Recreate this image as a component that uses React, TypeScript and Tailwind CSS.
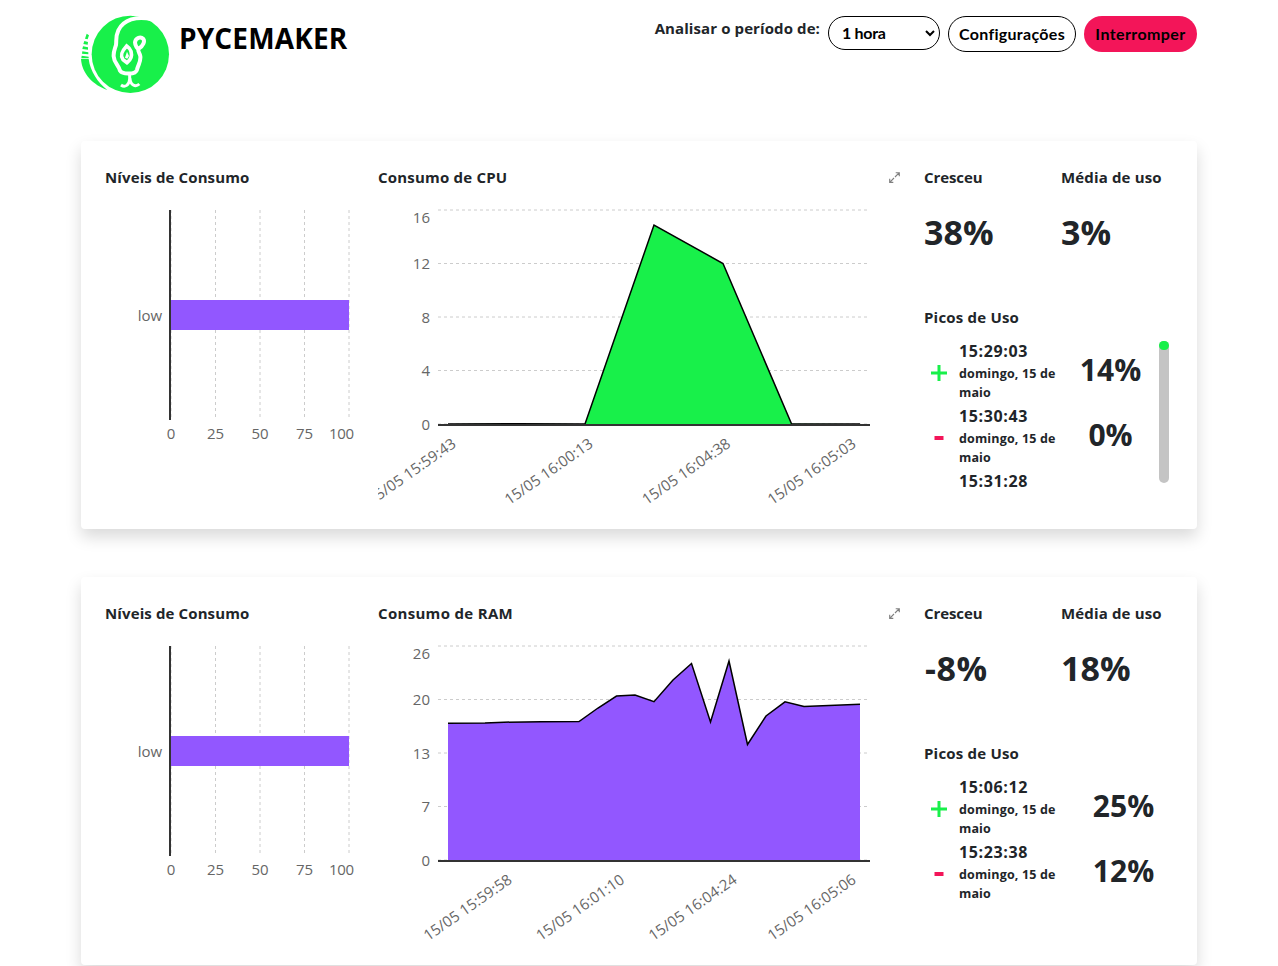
import React from "react";

type Pt = [number, number];
type Label = { x: number; text: string };
type Peak = { time: string; up: boolean; value?: string };

const FONT = "font-['Open_Sans','Noto_Sans',sans-serif]";

function Logo() {
  return (
    <svg className="block h-[79px] w-[89px]" viewBox="33 30 267 237" fill="none">
      <circle cx="181" cy="148" r="116" fill="#18f04a" />
      <path d="M33 162H56C61 200 83 232 112 255C70 240 36 207 33 162Z" fill="#18f04a" />
      <path d="M50 86L57 91L53 103L45 101ZM43 108L54 111L53 119L40 117ZM39 124L54 127V134L37 132ZM37 139L55 142V148L36 146ZM35 152L56 155V160H34Z" fill="#18f04a" />
      <path d="M246 43C200 31 160 45 145 76C136 95 140 106 138 120C134 134 130 140 131 154C132 173 145 179 150 197C158 209 197 209 201 194C204 179 213 172 211 154C210 145 203 139 205 132C220 124 225 108 220 102C212 94 197 98 195 112C195 123 204 132 205 132" stroke="#fff" strokeWidth="12" strokeLinejoin="round" />
      <path d="M170 123C155 139 149 151 159 164L171 173C184 164 187 154 183 139C180 130 176 127 170 123Z" stroke="#fff" strokeWidth="11" />
      <path d="M171 140L165 158L172 161L177 153Z" fill="#fff" />
      <path d="M179 207V222C178 240 165 249 153 240M180 220C181 240 196 248 208 237" stroke="#fff" strokeWidth="9" />
    </svg>
  );
}

function LevelsChart() {
  return (
    <svg className="block" width="260" height="310" viewBox="105 200 260 310">
      {[171, 215.5, 260, 304.5, 349].map((x) => (
        <line key={x} x1={x} x2={x} y1="210" y2="419" stroke="#ccc" strokeDasharray="3 3" />
      ))}
      <rect x="171" y="300" width="178" height="30" fill="#9257ff" />
      <line x1="170" x2="170" y1="210" y2="420" stroke="#333" strokeWidth="2" />
      <g className={FONT} fontSize="15" fill="#666" textAnchor="middle">
        <text x="150" y="321">low</text>
        <text x="171" y="439">0</text>
        <text x="215.5" y="439">25</text>
        <text x="260" y="439">50</text>
        <text x="304.5" y="439">75</text>
        <text x="341.5" y="439" textLength="25">100</text>
      </g>
    </svg>
  );
}

function AreaChart({ points, ticks, labels, color }: { points: Pt[]; ticks: string[]; labels: Label[]; color: string }) {
  const line = points.map((p) => p.join(",")).join(" ");
  const tickY = [223, 269, 323, 376, 430];
  return (
    <svg className="block" width="512" height="310" viewBox="378 200 512 310">
      {[210, 263.5, 317, 370.5, 424].map((y) => (
        <line key={y} x1="438" x2="868" y1={y} y2={y} stroke="#ccc" strokeDasharray="3 3" />
      ))}
      <polygon points={"448,424 " + line + " 860,424"} fill={color} />
      <polyline points={line} fill="none" stroke="#000" strokeWidth="1.5" />
      <line x1="438" x2="870" y1="425" y2="425" stroke="#333" strokeWidth="2" />
      <g className={FONT} fontSize="15" fill="#666" textAnchor="end">
        {ticks.map((t, i) => (
          <text key={t} x="430" y={tickY[i]}>{t}</text>
        ))}
        {labels.map((l) => (
          <text key={l.text} x={l.x} y="446" textLength="103.5" transform={"rotate(-35 " + l.x + " 446)"}>{l.text}</text>
        ))}
      </g>
    </svg>
  );
}

function ExpandIcon() {
  return (
    <svg className="mt-[7px] block" width="11" height="11" viewBox="0 0 11 11" fill="none" stroke="#808080" strokeWidth="1.15">
      <path d="M6.7 .7H10.3V4.3M10.3 .7L6 5M4.3 10.3H.7V6.7M.7 10.3L5 6" />
    </svg>
  );
}

function PeakRow({ peak, scroll }: { peak: Peak; scroll: boolean }) {
  return (
    <div className="flex h-[65px] items-start">
      <div className={"flex h-[65px] w-[30px] shrink-0 items-center justify-center pt-[3px] " + (peak.value ? "" : "invisible")}>
        <svg width="16" height="16" viewBox="0 0 16 16" aria-label={peak.up ? "aumento" : "queda"}>
          {peak.up ? (
            <path d="M0 6.5H6.5V0H9.5V6.5H16V9.5H9.5V16H6.5V9.5H0Z" fill="#18f04a" />
          ) : (
            <path d="M3.5 6H12.5V10H3.5Z" fill="#f31559" />
          )}
        </svg>
      </div>
      <div className="w-[106px] shrink-0 pl-[5px]">
        <div className="h-[25px] text-base leading-6 font-bold tracking-[0.62px]">{peak.time}</div>
        {peak.value && (
          <div className="w-[104px] text-[12.5px] leading-[19px] font-bold tracking-[0.15px]">domingo, 15 de<br />maio</div>
        )}
      </div>
      <div className={"flex h-[65px] items-center justify-center pb-[5px] text-[30px] font-bold " + (scroll ? "w-[99px] pl-[2px]" : "w-[127px]")}>{peak.value}</div>
    </div>
  );
}

function Card(props: {
  title: string; titleClass: string; points: Pt[]; ticks: string[]; labels: Label[]; color: string;
  growth: string; average: string; peaks: Peak[]; scroll: boolean;
}) {
  return (
    <section className="flex h-[388px] w-[1116px] shrink-0 rounded bg-white pt-6 pl-6 shadow-[0_8px_16px_rgba(0,0,0,0.15)]">
      <div className="w-[273px] shrink-0">
        <h2 className="h-[35px] text-[15px] leading-6 font-bold tracking-[0.12px]">Níveis de Consumo</h2>
        <LevelsChart />
      </div>
      <div className="w-[546px] shrink-0">
        <div className="flex h-[35px] w-[522px] justify-between">
          <h2 className={"text-[15px] leading-6 font-bold " + props.titleClass}>{props.title}</h2>
          <ExpandIcon />
        </div>
        <AreaChart points={props.points} ticks={props.ticks} labels={props.labels} color={props.color} />
      </div>
      <div className="w-[248px] shrink-0">
        <div className="flex h-[140px]">
          <div className="w-[137px]">
            <h2 className="text-[15px] leading-6 font-bold tracking-[-0.1px]">Cresceu</h2>
            <p className={"mt-[19px] text-[34px] leading-[48px] font-bold " + (props.growth.startsWith("-") ? "pl-px tracking-[0.6px]" : "")}>{props.growth}</p>
          </div>
          <div>
            <h2 className="text-[15px] leading-6 font-bold tracking-[0.15px] whitespace-nowrap">Média de uso</h2>
            <p className="mt-[19px] text-[34px] leading-[48px] font-bold">{props.average}</p>
          </div>
        </div>
        <h2 className="text-[15px] leading-6 font-bold tracking-[0.2px]">Picos de Uso</h2>
        <div className="mt-[10px] flex h-[155px] overflow-hidden">
          <div className="shrink-0">{props.peaks.map((p) => <PeakRow key={p.time} peak={p} scroll={props.scroll} />)}</div>
          {props.scroll && (
            <div className="mt-[2px] h-[142px] w-[10px] shrink-0 rounded-full bg-[#c4c4c4]">
              <div className="h-[9px] rounded-full bg-[#18f04a]" />
            </div>
          )}
        </div>
      </div>
    </section>
  );
}

const cpu: Pt[] = [[448, 424], [516, 423.7], [585, 424], [654, 225], [723, 263.5], [791.5, 423.8], [860, 424]];
const ram: Pt[] = [[448, 287.3], [485, 287], [504, 286.2], [541, 285.7], [579, 285.6], [598, 272], [616.5, 260], [635, 259], [654, 265.7], [673, 244], [691.5, 227.5], [710.5, 286], [729, 225], [747.5, 308.5], [766, 280], [785, 265.8], [804, 270.5], [860, 268.2]];

export default function App() {
  return (
    <div className={"flex h-[966px] w-[1278px] flex-col overflow-hidden bg-white pl-[81px] text-[#212529] " + FONT}>
      <header className="flex h-[141px] w-[1116px] shrink-0 justify-between">
        <div className="flex gap-[9px] pt-[15px]">
          <Logo />
          <h1 className="text-[28px] leading-[47px] font-bold tracking-[0.15px] text-black">PYCEMAKER</h1>
        </div>
        <div className="flex items-start gap-2 pt-4">
          <label className="text-[15px] leading-6 font-bold tracking-[0.1px]">Analisar o período de:</label>
          <button className="flex h-[34px] w-[112px] items-center justify-between rounded-full border border-black pr-1 pl-[13px] font-['Lato',sans-serif] text-base font-bold text-black">
            <span className="tracking-[-0.3px]">1 hora</span>
            <svg width="10" height="7" viewBox="0 0 10 7" fill="none" stroke="#000" strokeWidth="2"><path d="M1 1L5 5L9 1" /></svg>
          </button>
          <button className="h-9 w-32 rounded-full border border-black font-['Lato',sans-serif] text-base font-bold tracking-[0.3px] text-black">Configurações</button>
          <button className="h-9 w-[113px] rounded-full bg-[#f31559] font-['Lato',sans-serif] text-base font-bold tracking-[0.4px] text-black">Interromper</button>
        </div>
      </header>
      <main className="flex flex-col gap-12">
        <Card title="Consumo de CPU" titleClass="tracking-[0.2px]" points={cpu} ticks={["16", "12", "8", "4", "0"]} color="#18f04a"
          labels={[{ x: 457, text: "15/05 15:59:43" }, { x: 594, text: "15/05 16:00:13" }, { x: 731.5, text: "15/05 16:04:38" }, { x: 857, text: "15/05 16:05:03" }]}
          growth="38%" average="3%" scroll
          peaks={[{ time: "15:29:03", up: true, value: "14%" }, { time: "15:30:43", up: false, value: "0%" }, { time: "15:31:28", up: true }]} />
        <Card title="Consumo de RAM" titleClass="tracking-[0.32px]" points={ram} ticks={["26", "20", "13", "7", "0"]} color="#9257ff"
          labels={[{ x: 513, text: "15/05 15:59:58" }, { x: 625.5, text: "15/05 16:01:10" }, { x: 738, text: "15/05 16:04:24" }, { x: 857, text: "15/05 16:05:06" }]}
          growth="-8%" average="18%" scroll={false}
          peaks={[{ time: "15:06:12", up: true, value: "25%" }, { time: "15:23:38", up: false, value: "12%" }]} />
      </main>
    </div>
  );
}
